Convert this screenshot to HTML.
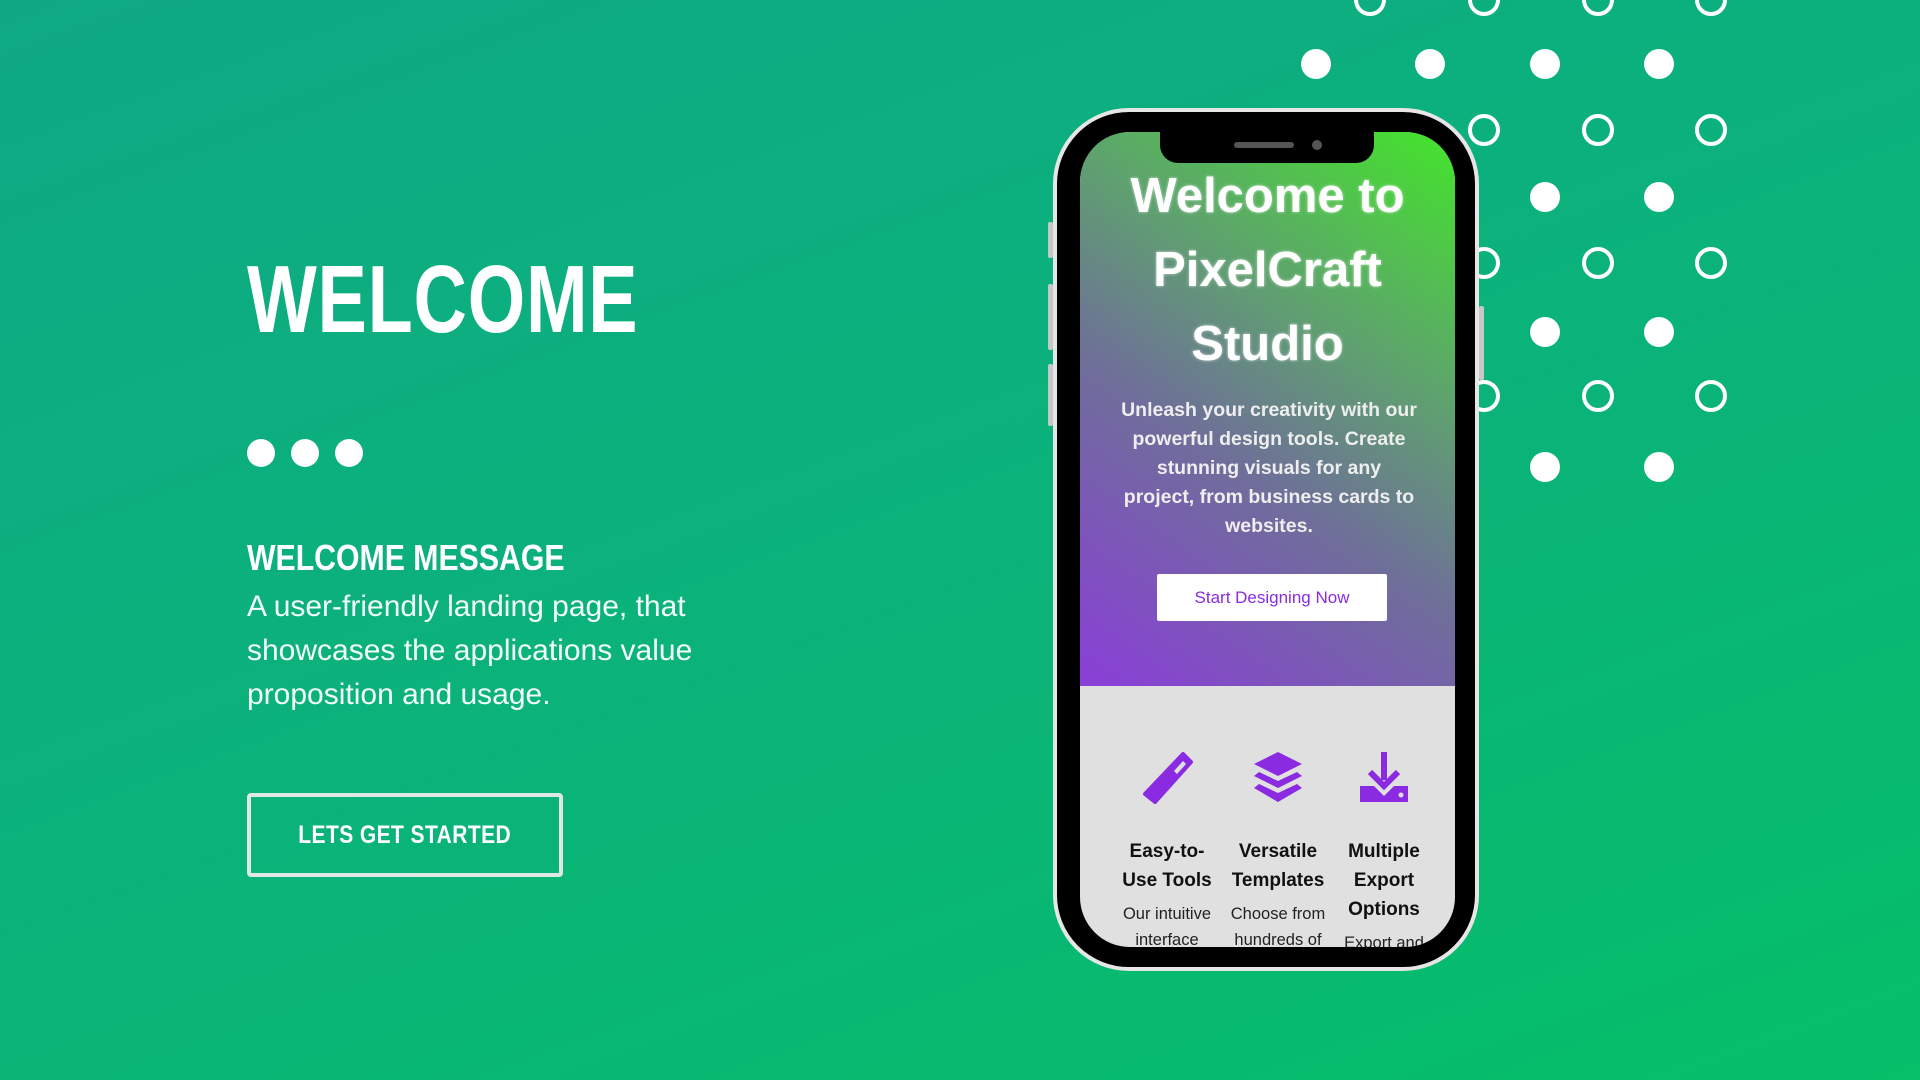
<!DOCTYPE html>
<html><head><meta charset="utf-8"><style>
*{margin:0;padding:0;box-sizing:border-box}
body{width:1920px;height:1080px;overflow:hidden;position:relative;font-family:"Liberation Sans",sans-serif;background:linear-gradient(160deg,#0fa986 0%,#0bb27a 50%,#05bf69 100%);color:#fff}
.abs{position:absolute}
h1{position:absolute;left:247px;top:252px;font-size:96px;font-weight:bold;transform:scaleX(.77);transform-origin:left top;line-height:1;letter-spacing:1px}
.dot{position:absolute;width:28px;height:28px;border-radius:50%;background:#fff;top:439px}
.h2{position:absolute;left:247px;top:537px;font-size:36px;font-weight:bold;transform:scaleX(.84);transform-origin:left top;white-space:nowrap}
.p{position:absolute;left:247px;top:585px;font-size:30px;line-height:44px;width:520px;color:#f2fff8}
.btn{position:absolute;left:247px;top:793px;width:316px;height:84px;border:4px solid #dfe8e4;border-radius:4px;font-size:25px;font-weight:bold;display:flex;align-items:center;justify-content:center;letter-spacing:.5px}
.btn span{display:inline-block;transform:scaleX(.84)}
.phone{position:absolute;left:1053px;top:108px;width:426px;height:863px;border-radius:76px;background:#000;border:4px solid #e6e6e6}
.screen{position:absolute;left:1080px;top:132px;width:375px;height:815px;border-radius:50px;overflow:hidden;background:#e0e0e0}
.hero{position:absolute;left:0;top:0;width:375px;height:554px;background:linear-gradient(215deg,#43e52a 0%,#5fa070 35%,#6f6e9a 60%,#8a3ed8 100%);text-align:center}
.t{position:absolute;left:0;width:375px;top:27px;font-size:49px;font-weight:bold;line-height:74px;text-shadow:0 0 3px rgba(255,255,255,.6)}
.d{position:absolute;left:40px;width:298px;top:264px;font-size:19.5px;font-weight:bold;line-height:29px;color:#eee}
.sb{position:absolute;left:77px;top:442px;width:230px;height:47px;background:#fff;color:#8a2be2;font-size:17px;display:flex;align-items:center;justify-content:center;border-radius:2px}
.notch{position:absolute;left:1160px;top:130px;width:214px;height:33px;background:#000;border-radius:0 0 18px 18px}
.side{position:absolute;background:#c8c8c8;width:5px;border-radius:2px}
.col{position:absolute;top:618px;width:112px;text-align:center;color:#111}
.col .ft{font-weight:bold;font-size:19px;line-height:29px;margin-top:26px}
.col .fd{font-size:16.5px;line-height:26px;margin-top:6px;color:#222}
</style></head><body>
<svg class="abs" style="left:0;top:0" width="1920" height="1080">
<g fill="#fff">
<circle cx="1316" cy="64" r="15"/><circle cx="1430" cy="64" r="15"/><circle cx="1545" cy="64" r="15"/><circle cx="1659" cy="64" r="15"/>
<circle cx="1545" cy="197" r="15"/><circle cx="1659" cy="197" r="15"/>
<circle cx="1545" cy="332" r="15"/><circle cx="1659" cy="332" r="15"/>
<circle cx="1545" cy="467" r="15"/><circle cx="1659" cy="467" r="15"/>
</g>
<g fill="none" stroke="#fff" stroke-width="4">
<circle cx="1370" cy="0" r="14"/><circle cx="1484" cy="0" r="14"/><circle cx="1598" cy="0" r="14"/><circle cx="1711" cy="0" r="14"/>
<circle cx="1484" cy="130" r="14"/><circle cx="1598" cy="130" r="14"/><circle cx="1711" cy="130" r="14"/>
<circle cx="1484" cy="263" r="14"/><circle cx="1598" cy="263" r="14"/><circle cx="1711" cy="263" r="14"/>
<circle cx="1484" cy="396" r="14"/><circle cx="1598" cy="396" r="14"/><circle cx="1711" cy="396" r="14"/>
</g></svg>
<h1>WELCOME</h1>
<div class="dot" style="left:247px"></div><div class="dot" style="left:291px"></div><div class="dot" style="left:335px"></div>
<div class="h2">WELCOME MESSAGE</div>
<div class="p">A user-friendly landing page, that showcases the applications value proposition and usage.</div>
<div class="btn"><span>LETS GET STARTED</span></div>
<div class="side" style="left:1048px;top:222px;height:36px"></div>
<div class="side" style="left:1048px;top:284px;height:66px"></div>
<div class="side" style="left:1048px;top:364px;height:62px"></div>
<div class="side" style="left:1479px;top:306px;height:74px"></div>
<div class="phone"></div>
<div class="screen">
<div class="hero">
<div class="t">Welcome to<br>PixelCraft<br>Studio</div>
<div class="d">Unleash your creativity with our powerful design tools. Create stunning visuals for any project, from business cards to websites.</div>
<div class="sb">Start Designing Now</div>
</div>
<div class="col" style="left:31px"><svg width="56" height="56" viewBox="0 0 56 56"><path d="M44 4 L52 12 L16 52 L6 44 Z" fill="#8a2be2" stroke="#8a2be2" stroke-width="4" stroke-linejoin="round"/><path d="M44 11 L47 14 L38 24 L35 21Z" fill="#e0e0e0"/></svg><div class="ft">Easy-to-<br>Use Tools</div><div class="fd">Our intuitive interface</div></div>
<div class="col" style="left:142px"><svg width="56" height="56" viewBox="0 0 56 56" fill="#8a2be2"><path d="M28 2 L52 14 L28 26 L4 14Z"/><path d="M9 22 L28 31 L47 22 L52 26 L28 38 L4 26Z"/><path d="M9 34 L28 43 L47 34 L52 38 L28 52 L4 38Z"/></svg><div class="ft">Versatile<br>Templates</div><div class="fd">Choose from hundreds of</div></div>
<div class="col" style="left:248px"><svg width="56" height="56" viewBox="0 0 56 56" fill="#8a2be2"><rect x="25" y="2" width="6" height="28"/><path d="M14 22 L28 36 L42 22" fill="none" stroke="#8a2be2" stroke-width="6"/><path d="M4 36 L18 36 L28 46 L38 36 L52 36 L52 52 L4 52Z"/><circle cx="45" cy="45" r="2.5" fill="#e0e0e0"/></svg><div class="ft">Multiple<br>Export<br>Options</div><div class="fd">Export and</div></div>
</div>
<div class="notch"><div class="abs" style="left:74px;top:12px;width:60px;height:6px;border-radius:3px;background:#555"></div><div class="abs" style="left:152px;top:10px;width:10px;height:10px;border-radius:50%;background:#555"></div></div>
</body></html>
